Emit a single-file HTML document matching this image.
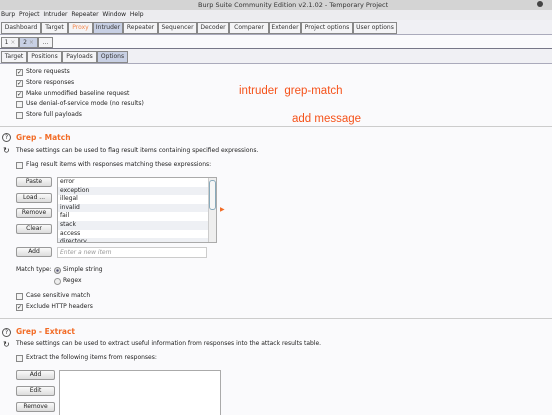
<!DOCTYPE html><html><head><style>
*{margin:0;padding:0;box-sizing:border-box}
html,body{width:552px;height:415px;overflow:hidden}
body{background:#fafafc;font-family:"DejaVu Sans","Liberation Sans",sans-serif;font-size:6px;color:#222;position:relative}
.a{position:absolute;white-space:nowrap}
.tab{position:absolute;height:12px;border:1px solid #888;background:#f4f4f6;font-size:6px;line-height:10px;text-align:center;color:#333}
.sel{background:#c8d0e4}
.cb{position:absolute;width:7px;height:7px;border:1px solid #888;background:#f4f4f4;font-size:6px;line-height:5px;text-align:center}
.btn{position:absolute;height:10px;border:1px solid #999;border-radius:2px;background:linear-gradient(#fafafa,#dcdcdc);text-align:center;line-height:8px;font-size:6px}
.h{color:#f26b25;font-weight:bold;font-size:7.5px}
.sep{position:absolute;left:0;width:552px;height:1px;background:#ccc}
.row{height:8.6px;line-height:8.6px;padding-left:2px}
.row:nth-child(even){background:#eef0f4}
.ann{position:absolute;color:#f5521a;font-size:11.5px;font-family:"Liberation Sans",sans-serif}
</style></head><body>
<div class="a" style="left:0;top:0;width:552px;height:10px;background:#d4d4d4"></div>
<div class="a" style="left:198px;top:1px;font-size:6.5px;color:#333">Burp Suite Community Edition v2.1.02 - Temporary Project</div>
<div class="a" style="left:537px;top:1px;width:6px;height:6px;border-radius:50%;background:#444"></div>
<div class="a" style="left:0;top:10px;width:552px;height:10px;background:#ececef"></div>
<div class="a" style="left:1px;top:11px">Burp&nbsp; Project&nbsp; Intruder&nbsp; Repeater&nbsp; Window&nbsp; Help</div>
<div class="a" style="left:0;top:20px;width:552px;height:15px;background:#f0f0f4;border-bottom:1px solid #aab"></div>
<div class="tab" style="left:1px;top:22px;width:40px">Dashboard</div>
<div class="tab" style="left:41px;top:22px;width:27px">Target</div>
<div class="tab" style="left:68px;top:22px;width:25px;color:#f5874a">Proxy</div>
<div class="tab sel" style="left:93px;top:22px;width:30px">Intruder</div>
<div class="tab" style="left:123px;top:22px;width:35px">Repeater</div>
<div class="tab" style="left:158px;top:22px;width:39px">Sequencer</div>
<div class="tab" style="left:197px;top:22px;width:32px">Decoder</div>
<div class="tab" style="left:229px;top:22px;width:40px">Comparer</div>
<div class="tab" style="left:269px;top:22px;width:32px">Extender</div>
<div class="tab" style="left:301px;top:22px;width:52px">Project options</div>
<div class="tab" style="left:353px;top:22px;width:44px">User options</div>
<div class="a" style="left:0;top:35px;width:552px;height:14px;background:#fafafc;border-bottom:1px solid #778"></div>
<div class="tab" style="left:1px;top:37px;width:18px;height:11px">1 <span style="color:#aaa">×</span></div>
<div class="tab sel" style="left:19px;top:37px;width:19px;height:11px">2 <span style="color:#999">×</span></div>
<div class="tab" style="left:38px;top:37px;width:15px;height:11px">...</div>
<div class="a" style="left:0;top:49px;width:552px;height:15px;background:#f0f0f4;border-bottom:1px solid #aab"></div>
<div class="tab" style="left:1px;top:51px;width:26px">Target</div>
<div class="tab" style="left:27px;top:51px;width:35px">Positions</div>
<div class="tab" style="left:62px;top:51px;width:35px">Payloads</div>
<div class="tab sel" style="left:97px;top:51px;width:31px">Options</div>

<div class="cb" style="left:16px;top:69px">✓</div><div class="a" style="left:26px;top:68px">Store requests</div>
<div class="cb" style="left:16px;top:80px">✓</div><div class="a" style="left:26px;top:79px">Store responses</div>
<div class="cb" style="left:16px;top:91px">✓</div><div class="a" style="left:26px;top:90px">Make unmodified baseline request</div>
<div class="cb" style="left:16px;top:101px"></div><div class="a" style="left:26px;top:100px">Use denial-of-service mode (no results)</div>
<div class="cb" style="left:16px;top:112px"></div><div class="a" style="left:26px;top:111px">Store full payloads</div>
<div class="sep" style="top:126px"></div>
<div class="ann" style="left:239px;top:85px">intruder&nbsp; grep-match</div>
<div class="ann" style="left:292px;top:113px">add message</div>

<div class="a" style="left:2px;top:133px;width:9px;height:9px;border:1px solid #555;border-radius:50%;font-size:6px;text-align:center;line-height:7px">?</div>
<div class="a h" style="left:16px;top:133px">Grep - Match</div>
<div class="a" style="left:3px;top:147px;font-size:8px;line-height:8px">↻</div>
<div class="a" style="left:16px;top:147px">These settings can be used to flag result items containing specified expressions.</div>
<div class="cb" style="left:16px;top:162px"></div><div class="a" style="left:26px;top:161px">Flag result items with responses matching these expressions:</div>
<div class="btn" style="left:16px;top:177px;width:36px">Paste</div>
<div class="btn" style="left:16px;top:193px;width:36px">Load ...</div>
<div class="btn" style="left:16px;top:208px;width:36px">Remove</div>
<div class="btn" style="left:16px;top:224px;width:36px">Clear</div>
<div class="a" style="left:57px;top:177px;width:160px;height:66px;border:1px solid #aaa;background:#fff;overflow:hidden">
<div class="row">error</div><div class="row">exception</div><div class="row">illegal</div><div class="row">invalid</div><div class="row">fail</div><div class="row">stack</div><div class="row">access</div><div class="row">directory</div>
<div class="a" style="right:0;top:0;width:8px;height:64px;background:#eee;border-left:1px solid #ccc"></div>
<div class="a" style="right:0;top:2px;width:7px;height:30px;border:1px solid #8ab;border-radius:3px;background:#f6f6f6"></div>
</div>
<div class="a" style="left:220px;top:206px;color:#f26b25;font-size:6px">▶</div>
<div class="btn" style="left:16px;top:247px;width:36px">Add</div>
<div class="a" style="left:57px;top:247px;width:150px;height:11px;border:1px solid #ccc;background:#fff;color:#999;font-style:italic;padding-left:2px;line-height:9px">Enter a new item</div>
<div class="a" style="left:16px;top:266px">Match type:</div>
<div class="a" style="left:54px;top:267px;width:7px;height:7px;border-radius:50%;border:1px solid #888;background:radial-gradient(#557 30%,#ddd 40%)"></div>
<div class="a" style="left:63px;top:266px">Simple string</div>
<div class="a" style="left:54px;top:278px;width:7px;height:7px;border-radius:50%;border:1px solid #999;background:#eee"></div>
<div class="a" style="left:63px;top:277px">Regex</div>
<div class="cb" style="left:16px;top:293px"></div><div class="a" style="left:26px;top:292px">Case sensitive match</div>
<div class="cb" style="left:16px;top:304px">✓</div><div class="a" style="left:26px;top:303px">Exclude HTTP headers</div>
<div class="sep" style="top:318px"></div>

<div class="a" style="left:2px;top:328px;width:9px;height:9px;border:1px solid #555;border-radius:50%;font-size:6px;text-align:center;line-height:7px">?</div>
<div class="a h" style="left:16px;top:327px">Grep - Extract</div>
<div class="a" style="left:3px;top:341px;font-size:8px;line-height:8px">↻</div>
<div class="a" style="left:16px;top:340px">These settings can be used to extract useful information from responses into the attack results table.</div>
<div class="cb" style="left:16px;top:355px"></div><div class="a" style="left:26px;top:354px">Extract the following items from responses:</div>
<div class="btn" style="left:16px;top:370px;width:39px">Add</div>
<div class="btn" style="left:16px;top:386px;width:39px">Edit</div>
<div class="btn" style="left:16px;top:402px;width:39px">Remove</div>
<div class="a" style="left:59px;top:370px;width:162px;height:50px;border:1px solid #aaa;background:#fff"></div>
</body></html>
